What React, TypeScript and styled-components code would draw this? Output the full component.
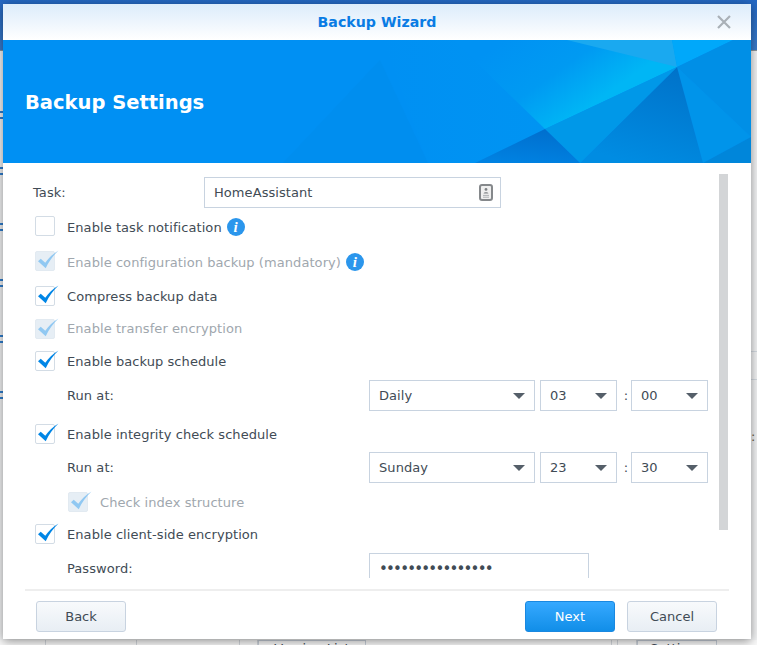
import styled, { createGlobalStyle } from "styled-components";

const GlobalStyle = createGlobalStyle`
  html, body {
    margin: 0;
    padding: 0;
    height: 100%;
    overflow: hidden;
    background: #f2f3f5;
  }
  #root {
    height: 100%;
  }
`

const CheckMark = ({muted}: {muted?: boolean}) => (
    <CheckSvg viewBox="0 0 24 22" $muted={muted}>
        <path d="M1 12.5 L4 9.5 L9 14 C12.5 9 17 4.5 23.5 0.5 C17.5 6.5 13 12.5 9.5 20 Z" fill="currentColor"/>
    </CheckSvg>
)

const CheckRow = ({label, state, info, indent, top, drop = 1}: {
    label: string
    state: "off" | "on" | "locked"
    info?: boolean
    indent?: boolean
    top: number
    drop?: number
}) => (
    <Row $top={top} $indent={indent}>
        <Box $locked={state === "locked"}>
            {state !== "off" && <CheckMark muted={state === "locked"}/>}
        </Box>
        <CheckLabel $muted={state === "locked"} $drop={drop}>{label}</CheckLabel>
        {info && <InfoDot>i</InfoDot>}
    </Row>
)

const Select = ({value, wide}: {value: string; wide?: boolean}) => (
    <SelectBox $wide={wide}>
        <span>{value}</span>
        <Arrow/>
    </SelectBox>
)

const ScheduleRow = ({top, day, hour, minute}: {top: number; day: string; hour: string; minute: string}) => (
    <Row $top={top}>
        <SubLabel>Run at:</SubLabel>
        <Select value={day} wide/>
        <Select value={hour}/>
        <Colon>:</Colon>
        <Select value={minute}/>
    </Row>
)

const Banner = () => (
    <BannerArt viewBox="0 0 748 123" preserveAspectRatio="none">
        <defs>
            <linearGradient id="glow" gradientUnits="userSpaceOnUse" x1="500" y1="0" x2="560" y2="85">
                <stop offset="0" stopColor="#0092f3"/>
                <stop offset="0.55" stopColor="#009af2"/>
                <stop offset="1" stopColor="#00b6f5"/>
            </linearGradient>
            <linearGradient id="deep" x1="0.8" y1="0" x2="0.4" y2="1">
                <stop offset="0" stopColor="#0072c9"/>
                <stop offset="1" stopColor="#008ce2"/>
            </linearGradient>
            <linearGradient id="low" x1="0.6" y1="0" x2="0.3" y2="1">
                <stop offset="0" stopColor="#006fce"/>
                <stop offset="1" stopColor="#0082e2"/>
            </linearGradient>
            <linearGradient id="side" x1="0" y1="0" x2="1" y2="0">
                <stop offset="0" stopColor="#0090f3"/>
                <stop offset="1" stopColor="#0094f2"/>
            </linearGradient>
        </defs>
        <rect width="748" height="123" fill="#0090f3"/>
        <polygon points="377,20 425,123 280,123" fill="#008eef"/>
        <polygon points="425,123 472,123 542,89 450,0 380,0" fill="url(#side)"/>
        <polygon points="450,0 669,0 674,27 542,89" fill="url(#glow)"/>
        <polygon points="564,0 669,0 674,27" fill="#1aa9f0"/>
        <polygon points="669,0 730,0 674,27" fill="#00a8fa"/>
        <polygon points="730,0 748,0 748,97 674,27" fill="#008fe6"/>
        <polygon points="674,27 748,97 700,123" fill="#0094ea"/>
        <polygon points="748,97 748,123 700,123" fill="#0086da"/>
        <polygon points="674,27 700,123 577,123" fill="url(#deep)"/>
        <polygon points="674,27 577,123 542,89" fill="#0098e8"/>
        <polygon points="542,89 577,123 472,123" fill="url(#low)"/>
    </BannerArt>
)

export default function App() {
    return (
        <Desktop>
            <GlobalStyle/>
            <TopBar/>
            <AppArea>
                <LeftRail>
                    {[0, 1, 2, 3, 4, 5].map((n) => <RailMark key={n}/>)}
                </LeftRail>
                <RightRail>
                    <RailLine/>
                    <RailLine/>
                    <RailColon>:</RailColon>
                </RightRail>
            </AppArea>
            <BottomStrip>
                <StripCell $width={46}/>
                <StripCell $width={91}/>
                <StripCell $width={103}/>
                <StripCell $width={18}/>
                <StripButton $width={108}>Version List</StripButton>
                <StripCell $width={246}/>
                <StripCell $width={6}/>
                <StripCell $width={19}/>
                <StripButton $width={80}>Settings</StripButton>
            </BottomStrip>

            <Dialog>
                <TitleBar>
                    <Title>Backup Wizard</Title>
                    <CloseIcon viewBox="0 0 14 14">
                        <path d="M1 1 L13 13 M13 1 L1 13" stroke="#a9b0b7" strokeWidth="2.2" fill="none"/>
                    </CloseIcon>
                </TitleBar>
                <BannerPanel>
                    <Banner/>
                    <Heading>Backup Settings</Heading>
                </BannerPanel>
                <Body>
                    <ScrollThumb/>
                    <Row $top={14}>
                        <TaskLabel>Task:</TaskLabel>
                        <TextBox $width={297}>
                            <span>HomeAssistant</span>
                            <IdIcon viewBox="0 0 14 17">
                                <rect x="1" y="1" width="12" height="15" rx="2" fill="#efefef" stroke="#85888b" strokeWidth="2"/>
                                <circle cx="7" cy="5.4" r="1.4" fill="#7f8285"/>
                                <path d="M4.6 9.6 C4.6 7.8 9.4 7.8 9.4 9.6 Z" fill="#7f8285"/>
                                <path d="M4 11.4 H10 M4 13.2 H10" stroke="#aeb1b4" strokeWidth="1"/>
                            </IdIcon>
                        </TextBox>
                    </Row>
                    <CheckRow top={8} state="off" label="Enable task notification" info drop={2}/>
                    <CheckRow top={15} state="locked" label="Enable configuration backup (mandatory)" info drop={2}/>
                    <CheckRow top={15} state="on" label="Compress backup data"/>
                    <CheckRow top={13} state="locked" label="Enable transfer encryption" drop={0}/>
                    <CheckRow top={12} state="on" label="Enable backup schedule"/>
                    <ScheduleRow top={9} day="Daily" hour="03" minute="00"/>
                    <CheckRow top={13} state="on" label="Enable integrity check schedule"/>
                    <ScheduleRow top={8} day="Sunday" hour="23" minute="30"/>
                    <CheckRow top={9} state="locked" label="Check index structure" indent/>
                    <CheckRow top={12} state="on" label="Enable client-side encryption"/>
                    <Row $top={9}>
                        <SubLabel>Password:</SubLabel>
                        <TextBox $width={220}>
                            <Dots>••••••••••••••••</Dots>
                        </TextBox>
                    </Row>
                </Body>
                <Footer>
                    <Button>Back</Button>
                    <FooterSpacer/>
                    <Button $primary>Next</Button>
                    <Button>Cancel</Button>
                </Footer>
            </Dialog>
        </Desktop>
    )
}

const Desktop = styled.div`
  position: relative;
  width: 757px;
  height: 645px;
  overflow: hidden;
  display: flex;
  flex-direction: column;
  background: #f4f5f6;
  font-family: "DejaVu Sans", Verdana, sans-serif;
  font-size: 13px;
  letter-spacing: 0.07px;
  color: #414b55;
`

const TopBar = styled.div`
  height: 50px;
  flex: none;
  background: linear-gradient(#2468c4, #3a7ccc);
  border-bottom: 1px solid #8f959b;
`

const AppArea = styled.div`
  flex: 1;
  display: flex;
  justify-content: space-between;
`

const LeftRail = styled.div`
  width: 3px;
  padding-top: 60px;
  display: flex;
  flex-direction: column;
  gap: 48px;
`

const RailMark = styled.div`
  height: 8px;
  border-top: 2px solid #2f7fd0;
  border-bottom: 2px solid #2f7fd0;
  box-sizing: border-box;
`

const RightRail = styled.div`
  width: 6px;
  padding-top: 300px;
`

const RailLine = styled.div`
  height: 1px;
  margin-bottom: 27px;
  background: #d6dce3;
`

const RailColon = styled.div`
  margin-top: 50px;
  line-height: 14px;
  color: #6d5f45;
`

const BottomStrip = styled.div`
  height: 5px;
  flex: none;
  display: flex;
  overflow: hidden;
  background: #fafafa;
`

const StripCell = styled.div<{$width: number}>`
  width: ${p => p.$width}px;
  flex: none;
  box-sizing: border-box;
  border-right: 1px solid #d4d8dd;
`

const StripButton = styled.div<{$width: number}>`
  width: ${p => p.$width}px;
  height: 20px;
  flex: none;
  box-sizing: border-box;
  border: 1px solid #c8d0da;
  text-align: center;
  line-height: 16px;
`

const Dialog = styled.div`
  position: absolute;
  left: 3px;
  top: 4px;
  width: 748px;
  height: 635px;
  display: flex;
  flex-direction: column;
  background: #fff;
  box-shadow: 0 2px 10px rgba(0, 0, 0, 0.45);
`

const TitleBar = styled.div`
  height: 36px;
  flex: none;
  position: relative;
  display: flex;
  align-items: center;
  justify-content: center;
  background: linear-gradient(#dcecfb, #fff);
`

const Title = styled.div`
  font-size: 14.2px;
  font-weight: 700;
  letter-spacing: 0;
  color: #0a7ce4;
`

const CloseIcon = styled.svg`
  position: absolute;
  right: 20px;
  top: 11px;
  width: 14px;
  height: 14px;
`

const BannerPanel = styled.div`
  position: relative;
  height: 123px;
  flex: none;
  box-sizing: border-box;
  display: flex;
  align-items: center;
  padding: 2px 0 0 22px;
  background: #0090f3;
`

const BannerArt = styled.svg`
  position: absolute;
  inset: 0;
  width: 100%;
  height: 100%;
`

const Heading = styled.h1`
  position: relative;
  margin: 0;
  font-size: 19.5px;
  font-weight: 700;
  letter-spacing: 0;
  color: #fff;
`

const Body = styled.div`
  position: relative;
  height: 415px;
  flex: none;
  overflow: hidden;
  box-sizing: border-box;
  padding-left: 32px;
`

const ScrollThumb = styled.div`
  position: absolute;
  left: 716px;
  top: 11px;
  width: 9px;
  height: 356px;
  background: #d3d5d7;
`

const Row = styled.div<{$top: number; $indent?: boolean}>`
  display: flex;
  align-items: center;
  min-height: 20px;
  margin-top: ${p => p.$top}px;
  margin-left: ${p => (p.$indent ? 33 : 0)}px;
`

const Box = styled.div<{$locked?: boolean}>`
  position: relative;
  width: 20px;
  height: 20px;
  flex: none;
  box-sizing: border-box;
  border-radius: 2px;
  border: 1px solid ${p => (p.$locked ? "#e2eaf1" : "#d3dce5")};
  background: ${p => (p.$locked ? "#e6eef5" : "#fff")};
`

const CheckSvg = styled.svg<{$muted?: boolean}>`
  position: absolute;
  left: 1px;
  top: -2px;
  width: 22px;
  height: 20px;
  color: ${p => (p.$muted ? "#90c8f2" : "#0086e6")};
`

const CheckLabel = styled.span<{$muted?: boolean; $drop: number}>`
  height: 20px;
  box-sizing: border-box;
  margin-left: 12px;
  padding-top: ${p => p.$drop}px;
  line-height: 20px;
  color: ${p => (p.$muted ? "#a0a7ae" : "#414b55")};
`

const InfoDot = styled.span`
  width: 18px;
  height: 18px;
  margin: 2px 0 0 5px;
  border-radius: 50%;
  background: #2b96ec;
  color: #fff;
  font-family: "Liberation Serif", serif;
  font-style: italic;
  font-weight: 700;
  font-size: 15px;
  line-height: 18px;
  text-align: center;
`

const TaskLabel = styled.span`
  width: 171px;
  margin-left: -2px;
`

const SubLabel = styled.span`
  width: 302px;
  margin-left: 32px;
  flex: none;
`

const TextBox = styled.div<{$width: number}>`
  width: ${p => p.$width}px;
  height: 31px;
  flex: none;
  box-sizing: border-box;
  padding: 0 7px 0 9px;
  display: flex;
  align-items: center;
  justify-content: space-between;
  border: 1px solid #c8d3e0;
`

const IdIcon = styled.svg`
  width: 14px;
  height: 17px;
`

const Dots = styled.span`
  font-size: 15px;
  letter-spacing: -1.8px;
`

const SelectBox = styled.div<{$wide?: boolean}>`
  width: ${p => (p.$wide ? 166 : 77)}px;
  height: 31px;
  flex: none;
  margin-right: ${p => (p.$wide ? 5 : 0)}px;
  box-sizing: border-box;
  padding: 0 9px 0 9px;
  display: flex;
  align-items: center;
  justify-content: space-between;
  border: 1px solid #c8d3e0;
`

const Arrow = styled.span`
  width: 0;
  height: 0;
  border-left: 6.5px solid transparent;
  border-right: 6.5px solid transparent;
  border-top: 6px solid #555f69;
`

const Colon = styled.span`
  width: 14px;
  box-sizing: border-box;
  padding-left: 4px;
  text-align: center;
`

const Footer = styled.div`
  margin: 11px 22px 0;
  padding: 10px 12px 0 11px;
  display: flex;
  gap: 12px;
  border-top: 2px solid #eeeeee;
`

const FooterSpacer = styled.div`
  flex: 1;
`

const Button = styled.button<{$primary?: boolean}>`
  width: 90px;
  height: 31px;
  padding: 0;
  border-radius: 3px;
  font: inherit;
  font-size: 13px;
  border: 1px solid ${p => (p.$primary ? "#1a88e0" : "#c8d3e0")};
  background: ${p => (p.$primary ? "linear-gradient(#36a9ff, #118ee8)" : "linear-gradient(#f8fafc, #e8eef4)")};
  color: ${p => (p.$primary ? "#fff" : "#414b55")};
`
